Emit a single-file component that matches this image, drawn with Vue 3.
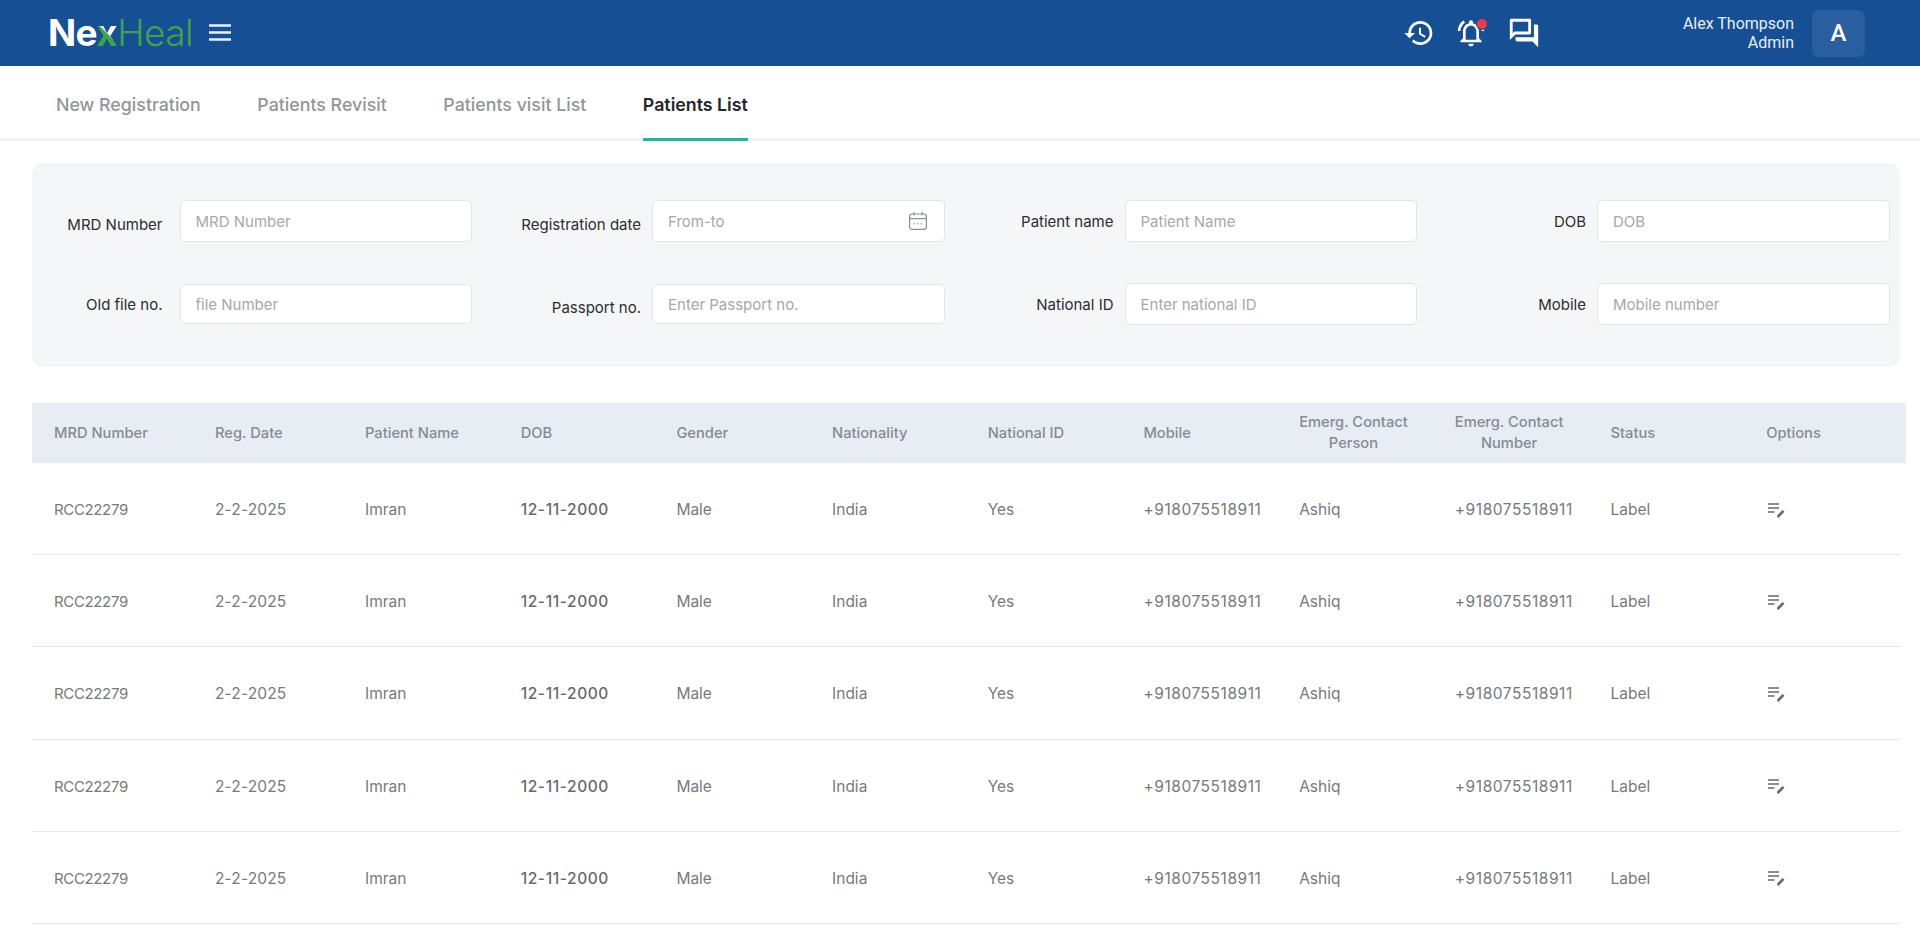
<script setup>
const tabs = [
  { label: 'New Registration', active: false },
  { label: 'Patients Revisit', active: false },
  { label: 'Patients visit List', active: false },
  { label: 'Patients List', active: true },
]
const fields = [
  { label: 'MRD Number', placeholder: 'MRD Number', cls: 'first low' },
  { label: 'Registration date', placeholder: 'From-to', cls: 'low', calendar: true },
  { label: 'Patient name', placeholder: 'Patient Name', cls: '' },
  { label: 'DOB', placeholder: 'DOB', cls: '' },
  { label: 'Old file no.', placeholder: 'file Number', cls: 'first short' },
  { label: 'Passport no.', placeholder: 'Enter Passport no.', cls: 'low short' },
  { label: 'National ID', placeholder: 'Enter national ID', cls: '' },
  { label: 'Mobile', placeholder: 'Mobile number', cls: '' },
]
const columns = [
  ['MRD Number'], ['Reg. Date'], ['Patient Name'], ['DOB'], ['Gender'], ['Nationality'],
  ['National ID'], ['Mobile'], ['Emerg. Contact', 'Person'], ['Emerg. Contact', 'Number'], ['Status'], ['Options'],
]
const rows = [1, 2, 3, 4, 5]
const cells = [
  { text: 'RCC22279', cls: 'code' },
  { text: '2-2-2025', cls: 'date' },
  { text: 'Imran' },
  { text: '12-11-2000', cls: 'strong' },
  { text: 'Male' },
  { text: 'India' },
  { text: 'Yes' },
  { text: '+918075518911', cls: 'phone' },
  { text: 'Ashiq' },
  { text: '+918075518911', cls: 'phone' },
  { text: 'Label' },
]
</script>

<template>
  <div class="page">
    <header class="topbar">
      <div class="logo"><span class="nex">Ne</span><span class="x">x</span><span class="heal">Heal</span></div>
      <svg class="menu" width="22" height="18" viewBox="0 0 22 18" aria-label="menu">
        <path d="M0 1.5h22M0 8.5h22M0 15.5h22" stroke="#eaf2ff" stroke-width="2.4" fill="none" />
      </svg>
      <div class="actions">
        <svg class="ic-history" width="32" height="32" viewBox="0 0 24 24" fill="#fff">
          <path d="M13 3c-4.97 0-9 4.03-9 9H1l3.89 3.89.07.14L9 12H6c0-3.87 3.13-7 7-7s7 3.13 7 7-3.13 7-7 7c-1.93 0-3.68-.79-4.94-2.06l-1.42 1.42C8.27 19.99 10.51 21 13 21c4.97 0 9-4.03 9-9s-4.03-9-9-9zm-1 5v5l4.28 2.54.72-1.21-3.5-2.08V8H12z" />
        </svg>
        <div class="bell">
          <svg width="32" height="32" viewBox="0 0 24 24" fill="#fff">
            <path d="M7.58 4.08L6.15 2.65C3.75 4.48 2.17 7.3 2.03 10.5h2c.15-2.65 1.51-4.97 3.55-6.42zm12.39 6.42h2c-.15-3.2-1.73-6.02-4.12-7.85l-1.42 1.43c2.02 1.45 3.39 3.77 3.54 6.42zM18 11c0-3.07-1.64-5.64-4.5-6.32V4c0-.83-.67-1.5-1.5-1.5s-1.5.67-1.5 1.5v.68C7.63 5.36 6 7.92 6 11v5l-2 2v1h16v-1l-2-2v-5zm-2 6H8v-6c0-2.48 1.51-4.5 4-4.5s4 2.02 4 4.5v6zm-4 5c1.1 0 2-.9 2-2h-4c0 1.1.9 2 2 2z" />
          </svg>
          <span class="dot"></span>
        </div>
        <svg class="ic-forum" width="34" height="34" viewBox="0 0 24 24" fill="#fff">
          <path d="M15 4v7H5.17L4 12.17V4h11m1-2H3c-.55 0-1 .45-1 1v14l4-4h10c.55 0 1-.45 1-1V3c0-.55-.45-1-1-1zm5 4h-2v9H6v2c0 .55.45 1 1 1h11l4 4V7c0-.55-.45-1-1-1z" />
        </svg>
      </div>
      <div class="user">
        <div>Alex Thompson</div>
        <div>Admin</div>
      </div>
      <div class="avatar">A</div>
    </header>

    <nav class="tabs">
      <a v-for="t in tabs" :key="t.label" class="tab" :class="{ active: t.active }">{{ t.label }}</a>
    </nav>

    <section class="filters">
      <div v-for="f in fields" :key="f.label" class="field" :class="f.cls">
        <label class="lbl">{{ f.label }}</label>
        <div class="box">
          <input type="text" :placeholder="f.placeholder" />
          <svg v-if="f.calendar" class="cal" width="20" height="20" viewBox="0 0 20 20" fill="none" stroke="#8b9096" stroke-width="1.2">
            <rect x="1.6" y="3" width="16.8" height="15.4" rx="2.6" />
            <path d="M1.6 7.6h16.8M6 1v3.4M14 1v3.4" />
            <path d="M6.2 12.8h1M9.5 12.8h1M12.8 12.8h1" stroke-width="1.4" />
          </svg>
        </div>
      </div>
    </section>

    <section class="table">
      <div class="thead">
        <div v-for="(c, i) in columns" :key="i" class="th">
          <span class="th-text"><template v-for="(line, j) in c" :key="j"><br v-if="j" />{{ line }}</template></span>
        </div>
      </div>
      <div v-for="r in rows" :key="r" class="tr">
        <div v-for="(c, i) in cells" :key="i" class="td" :class="c.cls">{{ c.text }}</div>
        <div class="td">
          <svg class="edit" width="20" height="20" viewBox="0 0 20 20" aria-label="edit">
            <path d="M1 4h11M1 8h11M1 12h6.5" stroke="#66696e" stroke-width="1.5" fill="none" />
            <path d="M10 17.4v-1.9l5.6-5.6 1.9 1.9-5.6 5.6z" fill="#66696e" />
          </svg>
        </div>
      </div>
    </section>
  </div>
</template>

<style>
html, body { margin: 0; background: #fff; }
</style>

<style scoped>
.page {
  font-family: Inter, "Liberation Sans", sans-serif;
  background: #fff;
  min-height: 941px;
  box-sizing: border-box;
}
.topbar {
  height: 66px;
  background: #164f93;
  display: flex;
  align-items: center;
  padding-left: 48px;
  box-sizing: border-box;
}
.logo {
  font-size: 37px;
  line-height: 66px;
  width: 161px;
  letter-spacing: -0.6px;
  white-space: nowrap;
}
.nex { color: #fff; font-weight: 700; }
.x {
  font-weight: 700;
  background: linear-gradient(45deg, #3da548 48%, #fff 52%);
  -webkit-background-clip: text;
  background-clip: text;
  color: transparent;
}
.heal { color: #3fa34d; font-weight: 300; }
.menu { display: block; }
.actions {
  margin-left: 1172px;
  display: flex;
  align-items: center;
}
.ic-history { display: block; }
.bell { position: relative; width: 32px; height: 32px; margin-left: 20px; }
.bell svg { display: block; }
.dot {
  position: absolute;
  top: 2px;
  right: 0;
  width: 10px;
  height: 10px;
  border-radius: 50%;
  background: #ee3a48;
  box-shadow: 0 0 0 1px #164f93;
}
.ic-forum { display: block; margin-left: 20px; }
.user {
  width: 253px;
  text-align: right;
  font-family: Roboto, sans-serif;
  color: #e6eefa;
  font-size: 16px;
  line-height: 19px;
  flex: none;
}
.avatar {
  width: 53px;
  height: 47px;
  margin-left: 18px;
  border-radius: 7px;
  background: #2a5e9e;
  color: #fff;
  font-family: Roboto, sans-serif;
  font-size: 24px;
  font-weight: 500;
  display: flex;
  align-items: center;
  justify-content: center;
}
.tabs {
  height: 72px;
  display: flex;
  gap: 56.5px;
  padding-left: 56px;
  border-bottom: 3px solid #f0f0f8;
}
.tab {
  height: 75px;
  box-sizing: border-box;
  line-height: 77px;
  font-size: 17.8px;
  font-weight: 500;
  color: #929599;
  border-bottom: 3px solid transparent;
  white-space: nowrap;
}
.tab.active { color: #23262b; font-weight: 600; border-bottom-color: #1fb8a0; }
.filters {
  margin: 22px 20px 0 32px;
  height: 202px;
  box-sizing: border-box;
  padding: 37px 10.5px 0 0;
  background: #f5f6f8;
  border-radius: 10px;
  box-shadow: 0 1px 1px #eceef1;
  display: grid;
  grid-template-columns: 440px repeat(3, 1fr);
  grid-auto-rows: 42px;
  row-gap: 41px;
}
.field { display: flex; align-items: center; justify-content: flex-end; }
.lbl {
  font-size: 15px;
  color: #2a2d31;
  margin-right: 11px;
  white-space: nowrap;
}
.field.first .lbl { margin-right: 17px; }
.field.low .lbl { padding-top: 6px; }
.field.first.short .lbl { padding-top: 0; }
.box { position: relative; width: 292.5px; flex: none; }
.field.short .box input { height: 40px; }
.box input {
  display: block;
  width: 100%;
  height: 42px;
  box-sizing: border-box;
  border: 1px solid #e3e4e8;
  border-radius: 5px;
  background: #fff;
  padding: 0 15px;
  font: 15px Inter, "Liberation Sans", sans-serif;
  color: #333;
  outline: none;
}
.box input::placeholder { color: #a6a8ab; opacity: 1; }
.cal { position: absolute; right: 17px; top: 11px; }
.table { margin: 38px 14px 0 32px; }
.thead, .tr {
  display: grid;
  grid-template-columns: 161px 150px repeat(10, 155.7px);
}
.thead {
  width: 1874px;
  height: 60px;
  background: #e8edf3;
  grid-template-columns: 161px 150px repeat(9, 155.7px) 161.7px;
}
.th {
  padding-left: 22px;
  display: flex;
  align-items: center;
  font-size: 14.7px;
  font-weight: 500;
  line-height: 21px;
  color: #868b95;
  white-space: nowrap;
}
.th-text { text-align: center; }
.tr {
  width: 1868px;
  height: 92.2px;
  box-sizing: border-box;
  border-bottom: 1px solid #e4e5e7;
}
.td {
  padding: 2px 0 0 22px;
  display: flex;
  align-items: center;
  font-size: 15.5px;
  color: #77797d;
  white-space: nowrap;
}
.td.code { font-size: 15px; letter-spacing: -0.35px; }
.td.date { letter-spacing: 0.15px; }
.td.phone { letter-spacing: 0.55px; }
.td.strong { font-weight: 500; color: #66696d; letter-spacing: 0.6px; }
.edit { display: block; margin-left: 1px; }
</style>
